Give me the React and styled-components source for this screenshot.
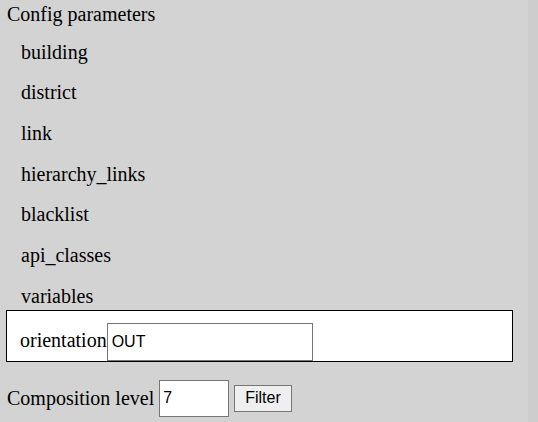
import React from 'react';
import styled, { createGlobalStyle } from 'styled-components';

const GlobalStyle = createGlobalStyle`
	html, body {
		margin: 0;
		padding: 0;
		background: #d3d3d3;
	}
	body {
		font-family: "Liberation Serif", "Times New Roman", serif;
		font-size: 20px;
		color: #000;
	}
`;

const Page = styled.div`
	display: grid;
	grid-template-columns: 1fr 10px;
	width: 538px;
	height: 422px;
	overflow: hidden;
`;

const Main = styled.div`
	padding: 3px 15px 0 6px;
`;

const Side = styled.div`
	background: #cdcdcd;
`;

const Title = styled.div`
	line-height: 23px;
	padding-left: 1px;
`;

const ParamList = styled.div`
	display: grid;
	row-gap: 17.67px;
	margin-top: 14.75px;
	padding-left: 15px;
`;

const Param = styled.div`
	line-height: 23px;
`;

const ParamBox = styled.div`
	display: flex;
	align-items: flex-end;
	margin-top: 2px;
	padding: 12px 0 0 13px;
	height: 38px;
	background: #fff;
	border: 1px solid #000;
`;

const Label = styled.span`
	line-height: 23px;
	margin-bottom: 9px;
`;

const TextInput = styled.input`
	box-sizing: border-box;
	width: ${(p) => p.$width}px;
	height: ${(p) => p.$height}px;
	margin: 0;
	padding: 0 ${(p) => p.$pad}px;
	border: 1px solid #767676;
	background: #fff;
	font-family: "Liberation Sans", Arial, sans-serif;
	font-size: 16px;
	color: #000;
	outline: none;
`;

const FilterRow = styled.div`
	display: flex;
	align-items: center;
	gap: 5px;
	margin-top: 18px;
	padding-left: 1px;
`;

const Button = styled.button`
	box-sizing: border-box;
	height: 27px;
	padding: 0 10px;
	margin: 0;
	border: 1px solid #767676;
	border-radius: 0;
	background: #efefef;
	font-family: "Liberation Sans", Arial, sans-serif;
	font-size: 16px;
	color: #000;
`;

const params = ['building', 'district', 'link', 'hierarchy_links', 'blacklist', 'api_classes', 'variables'];

export default function App() {
	return (
		<Page>
			<GlobalStyle />
			<Main>
				<Title>Config parameters</Title>
				<ParamList>
					{params.map((p) => (
						<Param key={p}>{p}</Param>
					))}
				</ParamList>
				<ParamBox>
					<Label>orientation</Label>
					<TextInput defaultValue="OUT" $width={206} $height={38} $pad={4} />
				</ParamBox>
				<FilterRow>
					<span>Composition level</span>
					<TextInput defaultValue="7" $width={70} $height={37} $pad={3} />
					<Button>Filter</Button>
				</FilterRow>
			</Main>
			<Side />
		</Page>
	);
}
